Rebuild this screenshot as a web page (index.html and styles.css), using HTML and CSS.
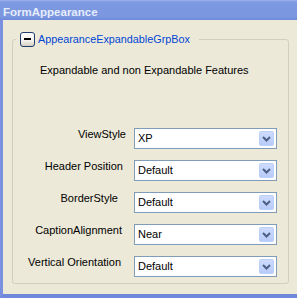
FILE: index.html
```html
<!DOCTYPE html>
<html lang="en">
<head>
    <meta charset="UTF-8">
    <meta name="viewport" content="width=device-width, initial-scale=1.0">
    <title>FormAppearance</title>
    <link rel="stylesheet" href="styles.css">
</head>
<body>
    <div class="window">
        <div class="title-bar">FormAppearance</div>
        <div class="client">
            <fieldset class="grp-box">
                <legend class="grp-legend">
                    <div class="grp-head">
                        <span class="expander"><span class="minus"></span></span>
                        <span class="grp-title">AppearanceExpandableGrpBox</span>
                    </div>
                </legend>
                <div class="desc">Expandable and non Expandable Features</div>
                <div class="rows">
                    <div class="lbl">ViewStyle</div>
                    <div class="combo"><span class="combo-text">XP</span><span class="drop-btn"><svg width="9" height="6" viewBox="0 0 9 6"><polyline points="1,1 4.5,4.5 8,1" fill="none" stroke="#4d6185" stroke-width="2"/></svg></span></div>

                    <div class="lbl pr-3">Header Position</div>
                    <div class="combo"><span class="combo-text">Default</span><span class="drop-btn"><svg width="9" height="6" viewBox="0 0 9 6"><polyline points="1,1 4.5,4.5 8,1" fill="none" stroke="#4d6185" stroke-width="2"/></svg></span></div>

                    <div class="lbl pr-8">BorderStyle</div>
                    <div class="combo"><span class="combo-text">Default</span><span class="drop-btn"><svg width="9" height="6" viewBox="0 0 9 6"><polyline points="1,1 4.5,4.5 8,1" fill="none" stroke="#4d6185" stroke-width="2"/></svg></span></div>

                    <div class="lbl pr-4">CaptionAlignment</div>
                    <div class="combo"><span class="combo-text">Near</span><span class="drop-btn"><svg width="9" height="6" viewBox="0 0 9 6"><polyline points="1,1 4.5,4.5 8,1" fill="none" stroke="#4d6185" stroke-width="2"/></svg></span></div>

                    <div class="lbl pr-5">Vertical Orientation</div>
                    <div class="combo"><span class="combo-text">Default</span><span class="drop-btn"><svg width="9" height="6" viewBox="0 0 9 6"><polyline points="1,1 4.5,4.5 8,1" fill="none" stroke="#4d6185" stroke-width="2"/></svg></span></div>
                </div>
            </fieldset>
        </div>
    </div>
</body>
</html>
```

FILE: styles.css
```css
body {
    margin: 0;
    font-family: "Liberation Sans", Arial, sans-serif;
    font-size: 11px;
    color: #000;
}

.window {
    width: 297px;
    height: 298px;
    overflow: hidden;
}

.title-bar {
    height: 20px;
    box-sizing: border-box;
    padding: 6px 0 0 3px;
    font-size: 11.5px;
    font-weight: bold;
    line-height: 13px;
    color: #e6ecfb;
    background: linear-gradient(#a3b8ee 0px, #8aa3e6 1px, #7c98e1 3px, #7b97e0 17px, #6d88da 20px);
}

.client {
    height: 278px;
    box-sizing: border-box;
    background-color: #ece9d8;
    border-left: 3px solid #7a90e0;
    border-bottom: 4px solid #7088dc;
    padding-top: 11px;
}

.grp-box {
    margin: 0 8px 0 9px;
    padding: 0 11px 6px 0;
    border: 1px solid #d0d0bf;
    border-radius: 3px;
    min-width: 0;
}

.grp-legend {
    margin-left: 3px;
    padding: 0 9px 0 4px;
}

.grp-head {
    display: flex;
    align-items: center;
    gap: 3px;
    height: 16px;
}

.expander {
    width: 13px;
    height: 13px;
    border: 1px solid #1f3e6e;
    border-radius: 3px;
    background: linear-gradient(#ffffff, #f3f1ea 60%, #d4d0c2);
    display: flex;
    align-items: center;
    justify-content: center;
}

.minus {
    width: 7px;
    height: 2px;
    background-color: #000;
}

.grp-title {
    color: #0046d5;
    font-size: 10.8px;
    line-height: 13px;
}

.desc {
    margin-top: 17px;
    padding-left: 27px;
    line-height: 13px;
}

.rows {
    margin-top: 51px;
    display: grid;
    grid-template-columns: 1fr 143px;
    column-gap: 8px;
    row-gap: 11px;
}

.lbl {
    text-align: right;
    line-height: 13px;
    white-space: nowrap;
}

.pr-3 { padding-right: 3px; }
.pr-4 { padding-right: 4px; }
.pr-5 { padding-right: 5px; }
.pr-8 { padding-right: 8px; }

.combo {
    height: 21px;
    box-sizing: border-box;
    border: 1px solid #7f9db9;
    background-color: #fff;
    display: flex;
    align-items: center;
    padding-left: 3px;
}

.combo-text {
    flex: 1;
    line-height: 13px;
}

.drop-btn {
    width: 15px;
    height: 15px;
    box-sizing: border-box;
    margin-right: 2px;
    border: 1px solid #bccff8;
    border-radius: 2px;
    background: linear-gradient(#cddcfd, #b7cbf7);
    display: flex;
    align-items: center;
    justify-content: center;
}
```
